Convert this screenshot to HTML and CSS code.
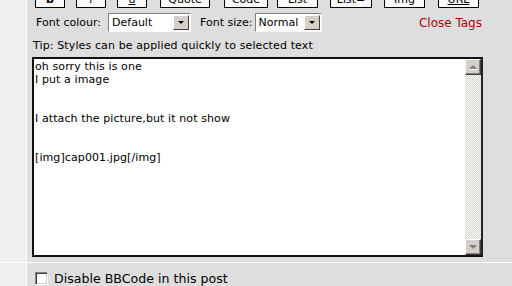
FILE: index.html
```html
<!DOCTYPE html>
<html>
<head>
<meta charset="utf-8">
<link rel="stylesheet" href="styles.css">
</head>
<body>
<div class="page">
  <div class="row main-row">
    <div class="side"></div>
    <div class="cell">
      <div class="toolbar">
        <button class="btn w30 b">b</button>
        <button class="btn w30 i">i</button>
        <button class="btn w30 u g13">u</button>
        <button class="btn w50 g14">Quote</button>
        <button class="btn w44 g9">Code</button>
        <button class="btn w41 g12">List</button>
        <button class="btn w42 g12">List=</button>
        <button class="btn w41 g13">Img</button>
        <button class="btn w41 u">URL</button>
      </div>
      <div class="fontrow">
        <span class="lbl">Font colour:</span>
        <span class="sel sel-colour"><span class="sel-text">Default</span><span class="sel-arrow"></span></span>
        <span class="lbl lbl2">Font size:</span>
        <span class="sel sel-size"><span class="sel-text">Normal</span><span class="sel-arrow"></span></span>
        <a class="close-tags" href="#">Close Tags</a>
      </div>
      <div class="tip">Tip: Styles can be applied quickly to selected text</div>
      <div class="editor">
        <textarea class="msg">oh sorry this is one
I put a image


I attach the picture,but it not show


[img]cap001.jpg[/img]</textarea>
        <div class="sb">
          <div class="sb-btn sb-up"><span class="tri-up"></span></div>
          <div class="sb-track"></div>
          <div class="sb-btn sb-down"><span class="tri-down"></span></div>
        </div>
      </div>
    </div>
  </div>
  <div class="row opt-row">
    <div class="side"></div>
    <div class="cell opt-cell">
      <span class="cb"></span><span class="opt-text">Disable BBCode in this post</span>
    </div>
  </div>
</div>
</body>
</html>
```

FILE: styles.css
```css
html, body {
  margin: 0;
  padding: 0;
  background: #dedede;
  overflow: hidden;
  height: 286px;
}
.page {
  font-family: "DejaVu Sans", Verdana, sans-serif;
  color: #000;
}
.row {
  display: flex;
}
.side {
  width: 26px;
  background: #efefef;
  border-right: 1px solid #fff;
  flex: none;
}
.cell {
  flex: 1;
  background: #dedede;
}
.main-row {
  height: 262px;
}
.opt-row {
  border-top: 1px solid #fff;
  height: 30px;
}
.toolbar {
  display: flex;
  margin-top: -10px;
  padding-left: 8px;
  height: 18px;
}
.btn {
  box-sizing: border-box;
  height: 18px;
  border: 1px solid #000;
  background: #fafafa;
  font-family: "DejaVu Sans", Verdana, sans-serif;
  font-size: 11px;
  line-height: 13px;
  padding: 0;
  margin: 0 11px 0 0;
  color: #000;
}
.w30 { width: 30px; }
.w50 { width: 50px; }
.w44 { width: 44px; }
.w41 { width: 41px; }
.w42 { width: 42px; }
.g9 { margin-right: 9px; }
.g12 { margin-right: 12px; }
.g13 { margin-right: 13px; }
.g14 { margin-right: 14px; }
.b { font-weight: bold; }
.i { font-style: italic; }
.u { text-decoration: underline; }
.fontrow {
  display: flex;
  align-items: center;
  margin-top: 5px;
  height: 19px;
  padding-left: 9px;
  font-size: 11px;
}
.lbl { margin-right: 7px; }
.lbl2 { margin-left: 9px; margin-right: 2px; }
.sel {
  position: relative;
  box-sizing: border-box;
  height: 19px;
  background: #fff;
  border-top: 1px solid #808080;
  border-left: 1px solid #808080;
  border-right: 1px solid #fff;
  border-bottom: 1px solid #fff;
  display: flex;
  align-items: center;
  font-size: 11px;
}
.sel-colour { width: 83px; }
.sel-size { width: 67px; }
.sel-text { padding-left: 3px; flex: 1; }
.sel-arrow {
  box-sizing: border-box;
  width: 16px;
  height: 15px;
  margin-right: 1px;
  background: #d4d0c8;
  border-top: 1px solid #fff;
  border-left: 1px solid #fff;
  border-right: 1px solid #404040;
  border-bottom: 1px solid #404040;
  display: flex;
  align-items: center;
  justify-content: center;
}
.sel-arrow::before {
  content: "";
  border-left: 3px solid transparent;
  border-right: 3px solid transparent;
  border-top: 3px solid #000;
}
.close-tags {
  margin-left: auto;
  margin-right: 30px;
  color: #b00000;
  text-decoration: none;
  font-size: 12px;
}
.tip {
  margin-top: 7px;
  padding-left: 6px;
  font-size: 11px;
  letter-spacing: 0.12px;
  line-height: 13px;
  height: 13px;
}
.editor {
  display: flex;
  box-sizing: border-box;
  margin-top: 5px;
  margin-left: 5px;
  width: 451px;
  height: 200px;
  border: 2px solid #111;
  border-right-color: #222;
  background: #fff;
}
.msg {
  flex: 1;
  border: 0;
  outline: none;
  resize: none;
  overflow: hidden;
  margin: 0;
  padding: 1px 1px;
  font-family: "DejaVu Sans", Tahoma, sans-serif;
  font-size: 11px;
  letter-spacing: 0.1px;
  line-height: 13px;
  color: #000;
  background: #fff;
}
.sb {
  width: 16px;
  display: flex;
  flex-direction: column;
}
.sb-btn {
  box-sizing: border-box;
  width: 16px;
  height: 16px;
  background: #d4d0c8;
  border-top: 1px solid #fff;
  border-left: 1px solid #fff;
  border-right: 1px solid #404040;
  border-bottom: 1px solid #404040;
  box-shadow: inset -1px -1px 0 #808080;
  display: flex;
  align-items: center;
  justify-content: center;
}
.tri-up {
  width: 0; height: 0;
  border-left: 4px solid transparent;
  border-right: 4px solid transparent;
  border-bottom: 4px solid #808080;
  box-shadow: 0 1px 0 #fff;
}
.tri-down {
  width: 0; height: 0;
  border-left: 4px solid transparent;
  border-right: 4px solid transparent;
  border-top: 4px solid #808080;
}
.sb-track {
  flex: 1;
  background: repeating-conic-gradient(#d4d0c8 0 25%, #fff 0 50%) 0 0 / 2px 2px;
}
.opt-cell {
  display: flex;
  align-items: center;
  padding-left: 8px;
  padding-top: 8px;
  align-self: flex-start;
}
.cb {
  box-sizing: border-box;
  width: 13px;
  height: 13px;
  background: #fff;
  border-top: 1px solid #808080;
  border-left: 1px solid #808080;
  border-right: 1px solid #fff;
  border-bottom: 1px solid #fff;
  box-shadow: inset 1px 1px 0 #404040, inset -1px -1px 0 #d4d0c8;
  margin-right: 6px;
}
.opt-text {
  font-size: 12.6px;
}
```
